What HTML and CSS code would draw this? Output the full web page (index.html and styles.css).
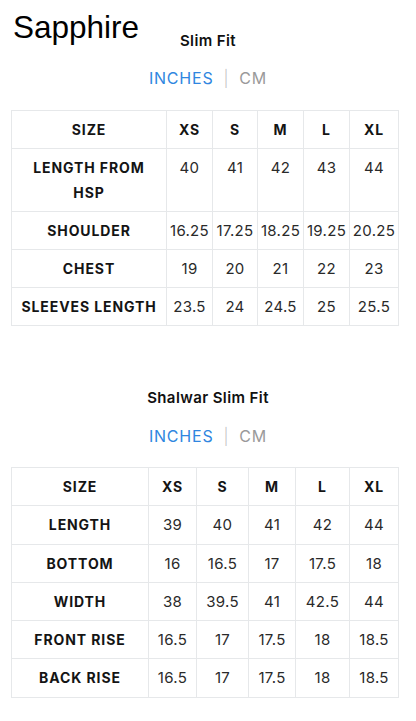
FILE: index.html
```
<!DOCTYPE html>
<html lang="en">
<head>
<meta charset="utf-8">
<title>Sapphire Size Chart</title>
<link rel="stylesheet" href="styles.css">
</head>
<body>
<div class="page">
  <div class="brand">Sapphire</div>

  <section class="chart chart-first">
    <h2 class="chart-title">Slim Fit</h2>
    <div class="units"><span class="unit active">INCHES</span><span class="sep">|</span><span class="unit">CM</span></div>
    <table class="size-table">
      <colgroup>
        <col class="c-label-a"><col class="c-a1"><col class="c-a2"><col class="c-a3"><col class="c-a4"><col class="c-a5">
      </colgroup>
      <tr class="head"><th>SIZE</th><th>XS</th><th>S</th><th>M</th><th>L</th><th>XL</th></tr>
      <tr class="tall"><th>LENGTH FROM<br>HSP</th><td>40</td><td>41</td><td>42</td><td>43</td><td>44</td></tr>
      <tr><th>SHOULDER</th><td>16.25</td><td>17.25</td><td>18.25</td><td>19.25</td><td>20.25</td></tr>
      <tr><th>CHEST</th><td>19</td><td>20</td><td>21</td><td>22</td><td>23</td></tr>
      <tr><th>SLEEVES LENGTH</th><td>23.5</td><td>24</td><td>24.5</td><td>25</td><td>25.5</td></tr>
    </table>
  </section>

  <section class="chart chart-second">
    <h2 class="chart-title">Shalwar Slim Fit</h2>
    <div class="units"><span class="unit active">INCHES</span><span class="sep">|</span><span class="unit">CM</span></div>
    <table class="size-table">
      <colgroup>
        <col class="c-label-b"><col class="c-b1"><col class="c-b2"><col class="c-b3"><col class="c-b4"><col class="c-b5">
      </colgroup>
      <tr class="head"><th>SIZE</th><th>XS</th><th>S</th><th>M</th><th>L</th><th>XL</th></tr>
      <tr><th>LENGTH</th><td>39</td><td>40</td><td>41</td><td>42</td><td>44</td></tr>
      <tr><th>BOTTOM</th><td>16</td><td>16.5</td><td>17</td><td>17.5</td><td>18</td></tr>
      <tr><th>WIDTH</th><td>38</td><td>39.5</td><td>41</td><td>42.5</td><td>44</td></tr>
      <tr><th>FRONT RISE</th><td>16.5</td><td>17</td><td>17.5</td><td>18</td><td>18.5</td></tr>
      <tr><th>BACK RISE</th><td>16.5</td><td>17</td><td>17.5</td><td>18</td><td>18.5</td></tr>
    </table>
  </section>
</div>
</body>
</html>
```

FILE: styles.css
```
html, body {
  margin: 0;
  padding: 0;
  background: #ffffff;
}

.page {
  position: relative;
  width: 416px;
  height: 721px;
  overflow: hidden;
  font-family: Inter, "Open Sans", sans-serif;
  color: #1c1c1c;
}

.brand {
  position: absolute;
  left: 13px;
  top: 7px;
  font-family: "Liberation Sans", Arial, sans-serif;
  font-size: 31.5px;
  line-height: 40px;
  color: #000;
}

.chart {
  display: flex;
  flex-direction: column;
  align-items: center;
}

.chart-first {
  padding-top: 31px;
}

.chart-second {
  padding-top: 62px;
}

.chart-title {
  margin: 0;
  font-size: 15px;
  font-weight: 600;
  line-height: 20px;
  color: #111;
  letter-spacing: 0.4px;
}

.units {
  display: flex;
  align-items: center;
  gap: 10px;
  margin-top: 15px;
  height: 24px;
  font-size: 16px;
  letter-spacing: 0.8px;
  color: #9a9a9a;
}

.chart-second .units {
  margin-top: 16px;
}

.unit.active {
  color: #2f86e0;
}

.sep {
  color: #c4c4c4;
  font-size: 16px;
  font-weight: 300;
}

.size-table {
  margin-top: 20px;
  margin-left: 11px;
  align-self: flex-start;
  border-collapse: collapse;
  table-layout: fixed;
  width: 387px;
  font-size: 14px;
}

.chart-second .size-table {
  margin-top: 19px;
}

.size-table th,
.size-table td {
  border: 1px solid #e6e8ea;
  text-align: center;
  vertical-align: middle;
  padding: 6px 0;
  line-height: 25px;
  height: 25px;
  white-space: nowrap;
}

.size-table th {
  font-weight: 700;
  letter-spacing: 0.9px;
  color: #141414;
}

.size-table td {
  font-weight: 400;
  font-size: 15px;
  color: #2a2a2a;
  letter-spacing: 0.3px;
}

.size-table tr.tall td {
  vertical-align: top;
}

.chart-second .size-table th,
.chart-second .size-table td {
  padding: 6px 0 6.3px;
}

.c-label-a { width: 155px; }
.c-a1 { width: 46px; }
.c-a2 { width: 45px; }
.c-a3 { width: 46px; }
.c-a4 { width: 46px; }
.c-a5 { width: 49px; }

.c-label-b { width: 137px; }
.c-b1 { width: 48px; }
.c-b2 { width: 52px; }
.c-b3 { width: 47px; }
.c-b4 { width: 54px; }
.c-b5 { width: 49px; }
```
